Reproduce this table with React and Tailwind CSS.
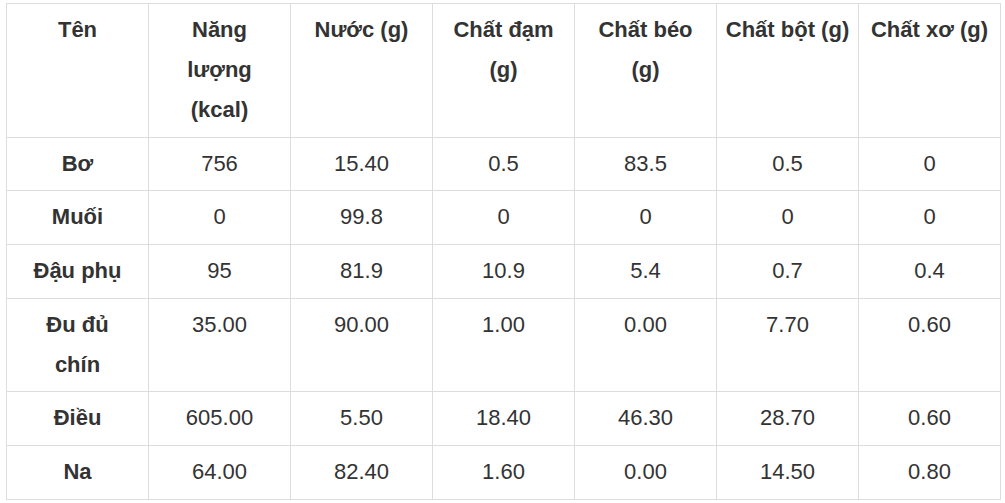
const headers = [
  ["Tên"],
  ["Năng", "lượng", "(kcal)"],
  ["Nước (g)"],
  ["Chất đạm", "(g)"],
  ["Chất béo", "(g)"],
  ["Chất bột (g)"],
  ["Chất xơ (g)"],
];

const rows = [
  [["Bơ"], "756", "15.40", "0.5", "83.5", "0.5", "0"],
  [["Muối"], "0", "99.8", "0", "0", "0", "0"],
  [["Đậu phụ"], "95", "81.9", "10.9", "5.4", "0.7", "0.4"],
  [["Đu đủ", "chín"], "35.00", "90.00", "1.00", "0.00", "7.70", "0.60"],
  [["Điều"], "605.00", "5.50", "18.40", "46.30", "28.70", "0.60"],
  [["Na"], "64.00", "82.40", "1.60", "0.00", "14.50", "0.80"],
];

function Lines({ lines }) {
  return lines.map((l, i) => (
    <span key={i} className="block">
      {l}
    </span>
  ));
}

export default function App() {
  return (
    <div
      className="bg-white w-[1005px] h-[503px] pl-[6px] pt-[3px] text-[#333]"
      style={{ fontFamily: '"Liberation Sans", Arial, sans-serif' }}
    >
      <table className="table-fixed border-collapse w-[995px] text-[22px] leading-[40px]">
        <thead>
          <tr>
            {headers.map((h, i) => (
              <th
                key={i}
                className="w-[142px] border border-[#dddddd] px-[8px] pt-[6px] pb-[6.67px] align-top text-center font-bold"
              >
                <Lines lines={h} />
              </th>
            ))}
          </tr>
        </thead>
        <tbody>
          {rows.map((r, ri) => (
            <tr key={ri}>
              <td className="border border-[#dddddd] px-[8px] pt-[6px] pb-[6.67px] align-top text-center font-bold">
                <Lines lines={r[0]} />
              </td>
              {r.slice(1).map((v, ci) => (
                <td
                  key={ci}
                  className="border border-[#dddddd] px-[8px] pt-[6px] pb-[6.67px] align-top text-center"
                >
                  {v}
                </td>
              ))}
            </tr>
          ))}
        </tbody>
      </table>
    </div>
  );
}
